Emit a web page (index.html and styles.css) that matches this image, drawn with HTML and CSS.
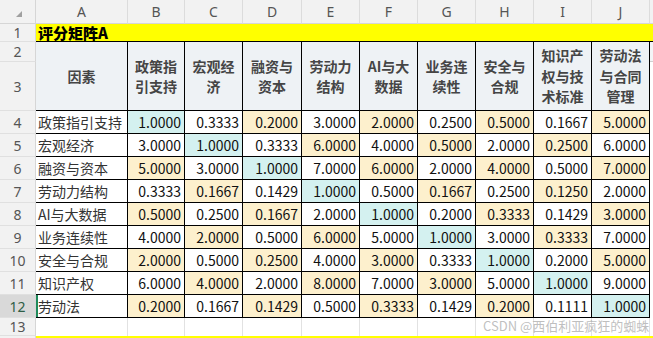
FILE: index.html
```html
<!DOCTYPE html>
<html lang="zh">
<head>
<meta charset="utf-8">
<link rel="stylesheet" href="styles.css">
</head>
<body>
<div class="sheet">
  <div class="grid">
    <div class="corner"><svg width="36" height="24" viewBox="0 0 36 24"><polygon points="22,11 22,17 16,17" fill="#a0a0a0"/></svg></div>
    <div class="ch">A</div><div class="ch">B</div><div class="ch">C</div><div class="ch">D</div><div class="ch">E</div><div class="ch">F</div><div class="ch">G</div><div class="ch">H</div><div class="ch">I</div><div class="ch">J</div><div class="ch"></div>

    <div class="rh">1</div>
    <div class="title"><span class="title-text">评分矩阵A</span></div>

    <div class="rh">2</div>
    <div class="hd">因素</div>
    <div class="hd">政策指引支持</div>
    <div class="hd">宏观经济</div>
    <div class="hd">融资与资本</div>
    <div class="hd">劳动力结构</div>
    <div class="hd">AI与大数据</div>
    <div class="hd">业务连续性</div>
    <div class="hd">安全与合规</div>
    <div class="hd">知识产权与技术标准</div>
    <div class="hd">劳动法与合同管理</div>
    <div class="kx k2"></div>
    <div class="rh">3</div>
    <div class="kx"></div>

    <div class="rh">4</div><div class="lb">政策指引支持</div>
    <div class="n c">1.0000</div><div class="n">0.3333</div><div class="n o">0.2000</div><div class="n">3.0000</div><div class="n o">2.0000</div><div class="n">0.2500</div><div class="n o">0.5000</div><div class="n">0.1667</div><div class="n o">5.0000</div><div class="kx"></div>

    <div class="rh">5</div><div class="lb">宏观经济</div>
    <div class="n">3.0000</div><div class="n c">1.0000</div><div class="n">0.3333</div><div class="n o">6.0000</div><div class="n">4.0000</div><div class="n o">0.5000</div><div class="n">2.0000</div><div class="n o">0.2500</div><div class="n">6.0000</div><div class="kx"></div>

    <div class="rh">6</div><div class="lb">融资与资本</div>
    <div class="n o">5.0000</div><div class="n">3.0000</div><div class="n c">1.0000</div><div class="n">7.0000</div><div class="n o">6.0000</div><div class="n">2.0000</div><div class="n o">4.0000</div><div class="n">0.5000</div><div class="n o">7.0000</div><div class="kx"></div>

    <div class="rh">7</div><div class="lb">劳动力结构</div>
    <div class="n">0.3333</div><div class="n o">0.1667</div><div class="n">0.1429</div><div class="n c">1.0000</div><div class="n">0.5000</div><div class="n o">0.1667</div><div class="n">0.2500</div><div class="n o">0.1250</div><div class="n">2.0000</div><div class="kx"></div>

    <div class="rh">8</div><div class="lb">AI与大数据</div>
    <div class="n o">0.5000</div><div class="n">0.2500</div><div class="n o">0.1667</div><div class="n">2.0000</div><div class="n c">1.0000</div><div class="n">0.2000</div><div class="n o">0.3333</div><div class="n">0.1429</div><div class="n o">3.0000</div><div class="kx"></div>

    <div class="rh">9</div><div class="lb">业务连续性</div>
    <div class="n">4.0000</div><div class="n o">2.0000</div><div class="n">0.5000</div><div class="n o">6.0000</div><div class="n">5.0000</div><div class="n c">1.0000</div><div class="n">3.0000</div><div class="n o">0.3333</div><div class="n">7.0000</div><div class="kx"></div>

    <div class="rh">10</div><div class="lb">安全与合规</div>
    <div class="n o">2.0000</div><div class="n">0.5000</div><div class="n o">0.2500</div><div class="n">4.0000</div><div class="n o">3.0000</div><div class="n">0.3333</div><div class="n c">1.0000</div><div class="n">0.2000</div><div class="n o">5.0000</div><div class="kx"></div>

    <div class="rh">11</div><div class="lb">知识产权</div>
    <div class="n">6.0000</div><div class="n o">4.0000</div><div class="n">2.0000</div><div class="n o">8.0000</div><div class="n">7.0000</div><div class="n o">3.0000</div><div class="n">5.0000</div><div class="n c">1.0000</div><div class="n">9.0000</div><div class="kx"></div>

    <div class="rh sel">12</div><div class="lb active">劳动法</div>
    <div class="n o">0.2000</div><div class="n">0.1667</div><div class="n o">0.1429</div><div class="n">0.5000</div><div class="n o">0.3333</div><div class="n">0.1429</div><div class="n o">0.2000</div><div class="n">0.1111</div><div class="n c">1.0000</div><div class="kx"></div>

    <div class="rh">13</div>
    <div class="e"></div><div class="e"></div><div class="e"></div><div class="e"></div><div class="e"></div><div class="e"></div><div class="e"></div><div class="e"></div><div class="e"></div><div class="e"></div><div class="e"></div>

    <div class="rh blank"></div>
    <div class="yl"></div>
  </div>
  <div class="watermark">CSDN @西伯利亚疯狂的蜘蛛</div>
</div>
</body>
</html>
```
FILE: styles.css
```css
html, body {
  margin: 0;
  padding: 0;
  background: #ffffff;
  overflow: hidden;
}
body {
  font-family: "Noto Sans CJK SC", "Noto Sans", sans-serif;
  font-size: 14px;
}
.sheet {
  position: relative;
  width: 653px;
  height: 338px;
  overflow: hidden;
}
.grid {
  display: grid;
  grid-template-columns: 36px 92px 57px 58px 59px 58px 58px 58px 58px 58px 58px 20px;
  grid-template-rows: 24px 18px 20px 49px repeat(9, 23px) 18px 10px;
}
.grid > div {
  box-sizing: border-box;
  overflow: hidden;
  white-space: nowrap;
}
.corner {
  background: #f2f2f2;
  border-right: 1px solid #d6d6d6;
  border-bottom: 1px solid #d6d6d6;
}
.corner svg { display: block; }
.ch {
  background: #f2f2f2;
  border-right: 1px solid #dcdcdc;
  border-bottom: 1px solid #d6d6d6;
  color: #555;
  font-family: "Noto Sans", sans-serif;
  font-size: 14px;
  display: flex;
  align-items: center;
  justify-content: center;
}
.rh {
  background: #f2f2f2;
  border-right: 1px solid #d6d6d6;
  border-bottom: 1px solid #e0e0e0;
  color: #555;
  font-family: "Noto Sans", sans-serif;
  font-size: 14px;
  display: flex;
  align-items: center;
  justify-content: center;
}
.rh.sel {
  background: #d9d9d9;
  color: #2f5d45;
}
.rh.blank {
  border-bottom: none;
}
.grid > .title {
  grid-column: 2 / -1;
  background: #ffff00;
  border-bottom: 1px solid #000;
  display: flex;
  align-items: center;
  padding-left: 2px;
  overflow: visible;
}
.title-text {
  font-weight: 900;
  font-size: 15px;
  line-height: 17px;
  color: #000;
}
.hd {
  grid-row: span 2;
  background: #eef2f5;
  border-right: 1px solid #000;
  border-bottom: 1px solid #000;
  color: #454545;
  font-weight: 700;
  font-size: 14px;
  line-height: 20.5px;
  padding: 0 3px;
  display: flex;
  align-items: center;
  justify-content: center;
  text-align: center;
}
.grid > .hd { white-space: normal; }
.kx {
  background: #ffffff;
}
.kx.k2 {
  background: #f3f5f7;
  border-bottom: 1px solid #d0d0d0;
}
.lb {
  background: #fff;
  border-right: 1px solid #000;
  border-bottom: 1px solid #000;
  color: #333;
  padding-left: 2px;
  line-height: 22px;
}
.lb.active {
  box-shadow: inset 2px 0 0 #1f8a5b;
}
.n {
  background: #fff;
  border-right: 1px solid #000;
  border-bottom: 1px solid #000;
  color: #111;
  text-align: right;
  padding-right: 3px;
  line-height: 22px;
}
.n.c { background: #d4f1f0; }
.n.o { background: #fdf0cd; }
.e {
  background: #fff;
  border-right: 1px solid #e2e2e2;
}
.yl {
  grid-column: 2 / -1;
  background: #ffff00;
}
.watermark {
  position: absolute;
  left: 483px;
  top: 317px;
  color: rgba(170, 170, 170, 0.75);
  font-size: 13px;
  line-height: 18px;
  white-space: nowrap;
}
```
